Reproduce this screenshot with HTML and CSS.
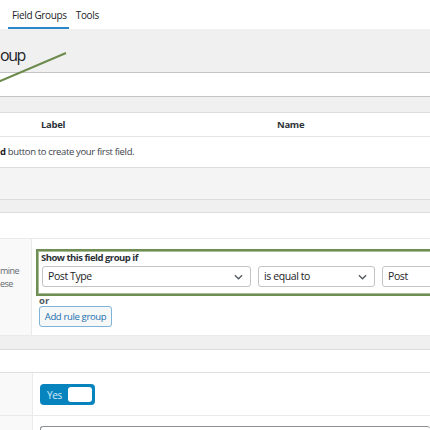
FILE: index.html
```html
<!DOCTYPE html>
<html>
<head>
<meta charset="utf-8">
<link rel="stylesheet" href="styles.css">
</head>
<body>
<div class="page">
  <div class="tabs">
    <span class="tab active">Field Groups</span>
    <span class="tab">Tools</span>
  </div>
  <div class="titlebar"><h1 class="title">oup</h1></div>
  <div class="titleinput"></div>
  <div class="gap"></div>
  <div class="thead">
    <span class="th th-label">Label</span>
    <span class="th th-name">Name</span>
  </div>
  <div class="empty"><b>d</b> button to create your first field.</div>
  <div class="footer-row"></div>
  <div class="gap2"></div>
  <div class="blank"></div>
  <div class="row rules">
    <div class="lab"><span>mine</span><span>ese</span></div>
    <div class="inp">
      <div class="rulegroup">
        <div class="rg-title">Show this field group if</div>
        <div class="selects">
          <div class="sel sel1">Post Type<svg class="chev" viewBox="0 0 10 6"><path d="M1 1l4 4 4-4" fill="none" stroke="#50575e" stroke-width="1.4"/></svg></div>
          <div class="sel sel2">is equal to<svg class="chev" viewBox="0 0 10 6"><path d="M1 1l4 4 4-4" fill="none" stroke="#50575e" stroke-width="1.4"/></svg></div>
          <div class="sel sel3">Post</div>
        </div>
      </div>
      <div class="or">or</div>
      <button class="btn">Add rule group</button>
    </div>
  </div>
  <div class="gap3"></div>
  <div class="blank2"></div>
  <div class="row toggle-row">
    <div class="lab"></div>
    <div class="inp"><div class="toggle"><span class="yes">Yes</span><span class="knob"></span></div></div>
  </div>
  <div class="row last-row">
    <div class="lab"></div>
    <div class="inp"><div class="lastbox"></div></div>
  </div>
  <svg class="annot" viewBox="0 0 430 430" width="430" height="430"><line x1="-2" y1="82" x2="66" y2="53" stroke="#6b8a4b" stroke-width="2"/></svg>
</div>
</body>
</html>
```

FILE: styles.css
```css
html, body { margin: 0; padding: 0; }
body {
  font-family: "Open Sans", "Noto Sans", sans-serif;
  font-size: 13px;
  color: #1d2327;
  background: #fff;
  width: 430px;
  height: 430px;
  overflow: hidden;
}
.page { position: relative; width: 430px; height: 430px; overflow: hidden; }
.tabs {
  height: 29px;
  background: #fff;
  display: flex;
  align-items: flex-end;
  padding-left: 8px;
  gap: 3px;
  box-sizing: border-box;
}
.tab {
  font-size: 10px;
  letter-spacing: -0.35px;
  color: #1d2327;
  padding: 0 4px 5px;
  line-height: 14px;
  border-bottom: 2px solid transparent;
}
.tab.active { border-bottom-color: #2b87c8; padding-right: 2px; }
.titlebar {
  height: 43px;
  background: #f0f0f1;
  display: flex;
  align-items: center;
  box-sizing: border-box;
  padding-top: 8px;
}
.title {
  margin: 0;
  font-weight: 400;
  font-size: 16px;
  line-height: 22px;
  letter-spacing: -1.5px;
}
.titleinput {
  height: 23px;
  background: #fff;
  border-top: 1px solid #c3c4c7;
  border-bottom: 1px solid #c3c4c7;
}
.gap { height: 15px; background: #f0f0f1; border-bottom: 1px solid #dcdcde; }
.thead {
  height: 23px;
  display: grid;
  grid-template-columns: 277px 1fr;
  align-items: center;
  border-bottom: 1px solid #e6e6e6;
  font-weight: 700;
  font-size: 9.5px;
  letter-spacing: -0.3px;
  color: #2c3338;
}
.th-label { padding-left: 41px; }
.empty {
  height: 30px;
  line-height: 30px;
  font-size: 9.5px;
  letter-spacing: -0.35px;
  color: #3c434a;
  border-bottom: 1px solid #dcdcde;
}
.empty b { color: #1d2327; }
.footer-row { height: 31px; background: #f4f4f4; border-bottom: 1px solid #dcdcde; }
.gap2 { height: 12px; background: #f0f0f1; border-bottom: 1px solid #dcdcde; }
.blank { height: 25px; background: #fff; border-bottom: 1px solid #eaeaea; }
.row { display: flex; border-bottom: 1px solid #eaeaea; }
.lab {
  width: 32px;
  background: #f9f9f9;
  border-right: 1px solid #eaeaea;
  flex: none;
  display: flex;
  flex-direction: column;
  font-size: 9px;
  letter-spacing: -0.5px;
  color: #646970;
  line-height: 13px;
  align-items: flex-start;
}
.inp { flex: 1; padding-left: 7px; min-width: 0; }
.rules { height: 97px; box-sizing: border-box; }
.rules .lab { padding-top: 25px; box-sizing: border-box; }
.rulegroup {
  margin-top: 10px;
  margin-left: -3px;
  border: 2px solid #6f8e54;
  border-right: none;
  height: 47px;
  box-sizing: border-box;
  padding: 2px 0 0 3px;
  margin-right: -10px;
  box-shadow: inset 0 0 0 1px #a9bd95;
}
.rg-title { font-weight: 700; font-size: 9.5px; letter-spacing: -0.5px; line-height: 10px; color: #2c3338; }
.selects { display: flex; gap: 7px; margin-top: 3px; padding-left: 1px; }
.sel {
  height: 21px;
  box-sizing: border-box;
  border: 1px solid #c3c4c7;
  border-radius: 3px;
  background: #fff;
  font-size: 10.5px;
  letter-spacing: -0.4px;
  line-height: 19px;
  padding-left: 5px;
  position: relative;
  flex: none;
}
.sel1 { width: 209px; }
.sel2 { width: 117px; }
.sel3 { width: 60px; }
.chev { position: absolute; right: 7px; top: 7px; width: 9px; height: 6px; }
.or { font-weight: 700; font-size: 9.5px; line-height: 9px; color: #50575e; }
.btn {
  display: block;
  margin-top: 1px;
  height: 21px;
  width: 73px;
  padding: 0;
  border: 1px solid #7fb3d8;
  border-radius: 3px;
  background: #f6f7f7;
  color: #2271b1;
  font-family: "Open Sans", "Noto Sans", sans-serif;
  font-size: 9.5px;
  letter-spacing: -0.35px;
}
.gap3 { height: 13px; background: #f0f0f1; border-bottom: 1px solid #dcdcde; }
.blank2 { height: 22px; background: #fff; border-bottom: 1px solid #e0e0e0; }
.toggle-row { height: 43px; box-sizing: border-box; }
.toggle-row .inp { padding-top: 11px; }
.toggle {
  width: 55px;
  height: 21px;
  background: #0783be;
  border-radius: 4px;
  display: flex;
  align-items: center;
  box-sizing: border-box;
  padding: 0 3px 0 7px;
  justify-content: space-between;
}
.yes { color: #d7eefa; font-size: 10px; letter-spacing: -0.3px; }
.knob { width: 24px; height: 15px; background: #fff; border-radius: 3px; }
.last-row { height: 20px; border-bottom: none; }
.last-row .inp { padding-top: 10px; }
.lastbox { height: 20px; border: 1px solid #8c8f94; border-radius: 3px; border-right: none; }
.annot { position: absolute; left: 0; top: 0; pointer-events: none; }
```
